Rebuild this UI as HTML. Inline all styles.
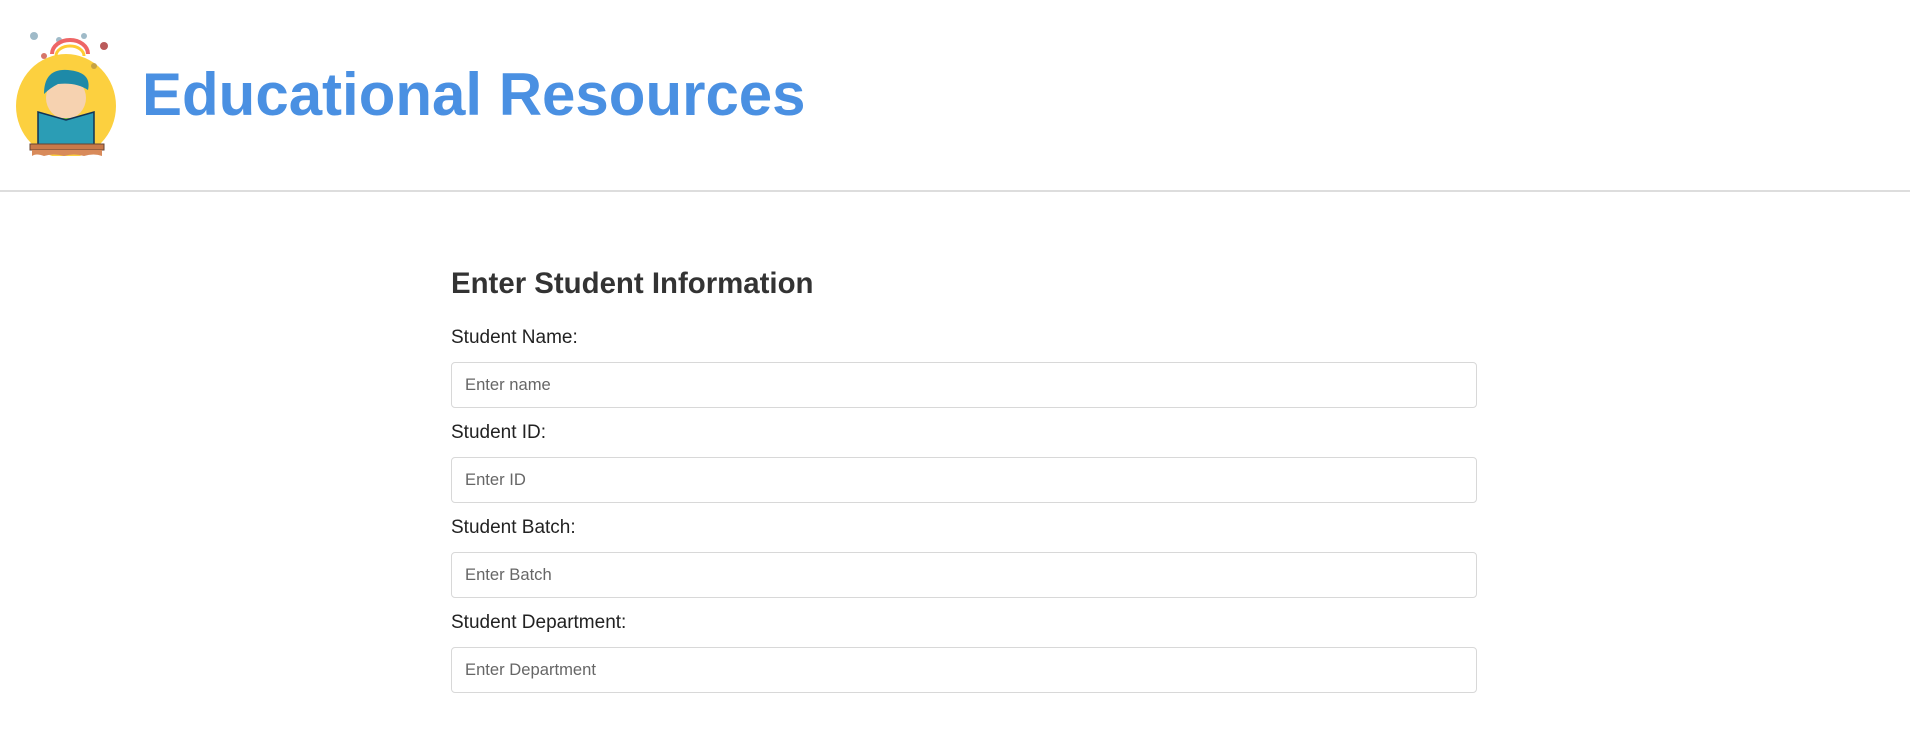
<!DOCTYPE html>
<html><head><style>
body{margin:0;width:1910px;height:747px;background:#fff;font-family:"Liberation Sans",Arial,sans-serif;position:relative;overflow:hidden}
.hdr{position:absolute;left:0;top:0;width:1910px;height:190px;border-bottom:2px solid #ddd}
h1{position:absolute;left:142px;top:58px;margin:0;font-size:60px;font-weight:bold;color:#4a90e2;line-height:74px}
h3{position:absolute;left:451px;top:266px;margin:0;font-size:29.4px;font-weight:bold;color:#333;line-height:36px}
.lab{position:absolute;left:451px;font-size:19px;color:#222;line-height:22px}
.inp{position:absolute;left:451px;width:1024px;height:44px;border:1px solid #d8d8d8;border-radius:4px;box-sizing:content-box}
.inp span{position:absolute;left:13px;top:12px;font-size:16.6px;color:#666;line-height:20px}
</style></head><body>
<div class="hdr">
<svg style="position:absolute;left:14px;top:26px" width="104" height="130" viewBox="0 0 104 130">
<ellipse cx="52" cy="80" rx="50" ry="52" fill="#fcd03f"/>
<g fill="#8ab" opacity=".8"><circle cx="20" cy="10" r="4"/><circle cx="45" cy="14" r="3"/><circle cx="70" cy="10" r="3"/><circle cx="90" cy="20" r="4" fill="#a33"/><circle cx="30" cy="30" r="3" fill="#c54"/><circle cx="80" cy="40" r="3" fill="#b94"/></g>
<path d="M38 28 A18 14 0 0 1 74 28" stroke="#e66" stroke-width="4" fill="none"/>
<path d="M42 30 A14 10 0 0 1 70 30" stroke="#fc3" stroke-width="3" fill="none"/>
<ellipse cx="52" cy="72" rx="20" ry="21" fill="#f6d2b0"/>
<path d="M30 68 Q30 42 54 44 Q78 46 74 64 Q62 56 44 58 Q36 62 30 68Z" fill="#1e8aa8"/>
<rect x="38" y="92" width="30" height="16" fill="#7bc043"/>
<path d="M24 86 L52 94 L80 86 L80 120 L52 124 L24 120Z" fill="#2b9db5" stroke="#135" stroke-width="1.5"/>
<rect x="16" y="118" width="74" height="6" fill="#c97a4a" stroke="#643" stroke-width="1"/>
<path d="M18 124 H88 V130 Q80 127 70 130 Q60 127 50 130 Q40 127 30 130 Q22 127 18 130Z" fill="#d88a5a"/>
</svg>
<h1>Educational Resources</h1>
</div>
<h3>Enter Student Information</h3>
<div class="lab" style="top:327px">Student Name:</div>
<div class="inp" style="top:362px"><span>Enter name</span></div>
<div class="lab" style="top:422px">Student ID:</div>
<div class="inp" style="top:457px"><span>Enter ID</span></div>
<div class="lab" style="top:517px">Student Batch:</div>
<div class="inp" style="top:552px"><span>Enter Batch</span></div>
<div class="lab" style="top:612px">Student Department:</div>
<div class="inp" style="top:647px"><span>Enter Department</span></div>
</body></html>
